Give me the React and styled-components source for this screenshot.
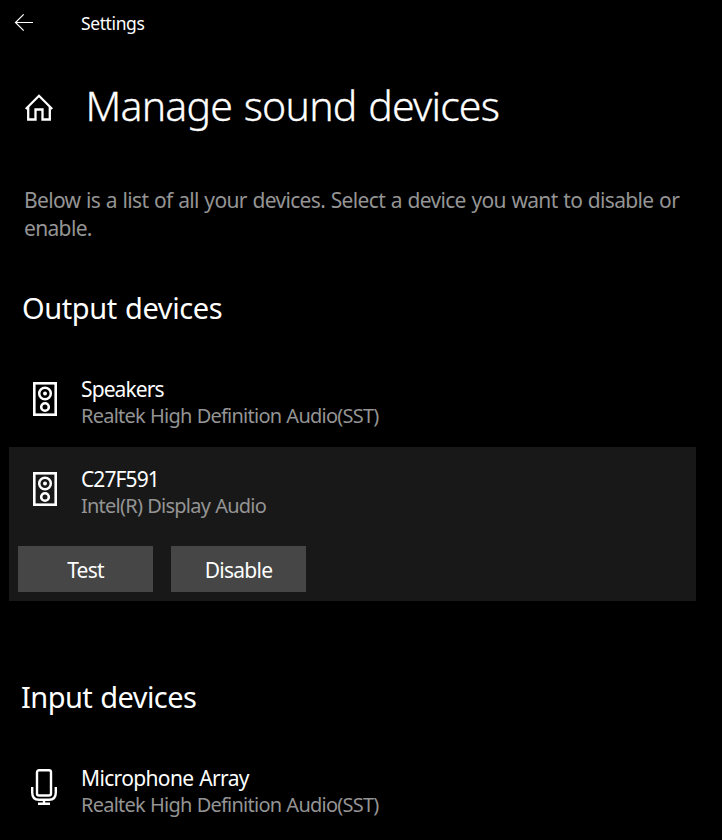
import React from 'react';
import styled, { createGlobalStyle } from 'styled-components';

const BackIcon = () => (
  <svg width="20" height="18" viewBox="0 0 20 18" fill="none" stroke="#fff" strokeWidth="1.2">
    <path d="M19 8.5H1.5M9.7 0.4L1.5 8.5L9.7 16.6" />
  </svg>
);

const HomeIcon = () => (
  <svg width="30" height="28" viewBox="0 0 30 28" fill="none" stroke="#fff" strokeWidth="2.3">
    <path d="M1.8 15L15 1.8L28.2 15" />
    <path d="M4.2 13V25.5H11.5V15.5H18.5V25.5H25.8V13" />
  </svg>
);

const SpeakerIcon = () => (
  <svg width="24" height="34" viewBox="0 0 24 34" fill="none" stroke="#fff">
    <rect x="1.3" y="1.3" width="21.4" height="31.4" strokeWidth="2.6" />
    <circle cx="12" cy="11.5" r="5.8" strokeWidth="2.5" />
    <circle cx="12" cy="11.5" r="2" fill="#fff" stroke="none" />
    <circle cx="12" cy="25" r="3.8" strokeWidth="2.6" />
  </svg>
);

const MicIcon = () => (
  <svg width="26" height="36" viewBox="0 0 26 36" fill="none" stroke="#fff" strokeWidth="2.4">
    <rect x="6" y="1.2" width="14" height="25.3" rx="2" />
    <path d="M1.2 18V23.5Q1.2 30.8 8 30.8H18Q24.8 30.8 24.8 23.5V18" />
    <path d="M13 30.5V35M7 34.8H19" />
  </svg>
);

const Device = (props) => {
  const { icon, name, driver, spacing, lift, selected, children } = props;

  return (
    <DeviceItem $selected={selected}>
      <DeviceInfo>
        <DeviceIcon $lift={lift}>{icon}</DeviceIcon>
        <div>
          <DeviceName $spacing={spacing}>{name}</DeviceName>
          <DriverName>{driver}</DriverName>
        </div>
      </DeviceInfo>
      {children}
    </DeviceItem>
  );
};

const App = () => {
  return (
    <React.Fragment>
      <GlobalStyle />
      <Page>
        <TopBar>
          <BackButton aria-label="Back">
            <BackIcon />
          </BackButton>
          <AppName>Settings</AppName>
        </TopBar>
        <TitleRow>
          <HomeIcon />
          <Title>Manage sound devices</Title>
        </TitleRow>
        <Description>
          Below is a list of all your devices. Select a device you want to disable or
          <br />
          enable.
        </Description>

        {/* Output */}
        <Section $gap="46px">
          <SectionTitle $indent="22px">Output devices</SectionTitle>
          <Device
            icon={<SpeakerIcon />}
            name="Speakers"
            driver="Realtek High Definition Audio(SST)"
          />
          <Device icon={<SpeakerIcon />} name="C27F591" driver="Intel(R) Display Audio" selected>
            <Actions>
              <ActionButton>Test</ActionButton>
              <ActionButton>Disable</ActionButton>
            </Actions>
          </Device>
        </Section>

        {/* Input */}
        <Section $gap="76px">
          <SectionTitle $indent="21px" $spacing="-0.55px">Input devices</SectionTitle>
          <Device
            icon={<MicIcon />}
            name="Microphone Array"
            driver="Realtek High Definition Audio(SST)"
            spacing="-0.65px"
            lift
          />
        </Section>
      </Page>
    </React.Fragment>
  );
};

const GlobalStyle = createGlobalStyle`
  body {
    margin: 0;
    background: #000;
    overflow: hidden;
  }
`;

const Page = styled.main`
  width: 722px;
  height: 840px;
  overflow: hidden;
  background: #000;
  color: #fff;
  font-family: 'Noto Sans', 'Open Sans', sans-serif;
  font-size: 21px;
  white-space: nowrap;
`;

const TopBar = styled.header`
  display: flex;
  align-items: center;
  height: 46px;
  padding-left: 14px;
`;

const BackButton = styled.button`
  display: flex;
  width: 67px;
  padding: 0;
  border: 0;
  background: none;
`;

const AppName = styled.span`
  font-size: 17.5px;
  letter-spacing: -0.4px;
`;

const TitleRow = styled.div`
  display: flex;
  align-items: center;
  height: 58px;
  margin-top: 30px;
  padding-left: 24px;

  svg {
    margin-top: 6px;
  }
`;

const Title = styled.h1`
  margin: 0 0 0 31.5px;
  font-size: 41px;
  font-weight: 300;
  line-height: 58px;
  letter-spacing: -0.8px;
  word-spacing: 1.8px;
  -webkit-text-stroke: 0.3px #fff;
`;

const Description = styled.p`
  margin: 52px 0 0;
  padding-left: 24px;
  color: #949494;
  line-height: 28px;
  letter-spacing: -0.66px;
  word-spacing: 0.8px;
`;

const Section = styled.section`
  margin-top: ${(props) => props.$gap};
`;

const SectionTitle = styled.h2`
  margin: 0 0 29px;
  padding-left: ${(props) => props.$indent};
  font-size: 29px;
  font-weight: 400;
  line-height: 40px;
  letter-spacing: ${(props) => props.$spacing || '-0.4px'};
  word-spacing: 1px;
`;

const DeviceItem = styled.div`
  width: 687px;
  margin-left: 9px;
  background: ${(props) => (props.$selected ? '#181818' : 'transparent')};
`;

const DeviceInfo = styled.div`
  display: flex;
  padding: 19px 0;
`;

// the microphone is taller than the speaker, so it starts higher in the row
const DeviceIcon = styled.div`
  display: flex;
  width: ${(props) => (props.$lift ? '50px' : '48px')};
  height: 36px;
  padding-top: ${(props) => (props.$lift ? '4px' : '6px')};
  padding-left: ${(props) => (props.$lift ? '22px' : '24px')};
`;

const DeviceName = styled.div`
  line-height: 27px;
  letter-spacing: ${(props) => props.$spacing || '-0.9px'};
  word-spacing: 1px;
`;

const DriverName = styled.div`
  color: #949494;
  font-size: 20px;
  line-height: 25px;
  letter-spacing: -0.76px;
  word-spacing: 0.6px;
`;

const Actions = styled.div`
  display: flex;
  gap: 18px;
  padding: 9px;
`;

const ActionButton = styled.button`
  width: 135px;
  height: 46px;
  padding: 2px 0 0;
  border: 0;
  background: #464646;
  color: #fff;
  font: inherit;
  letter-spacing: -0.75px;
`;

export default App;
